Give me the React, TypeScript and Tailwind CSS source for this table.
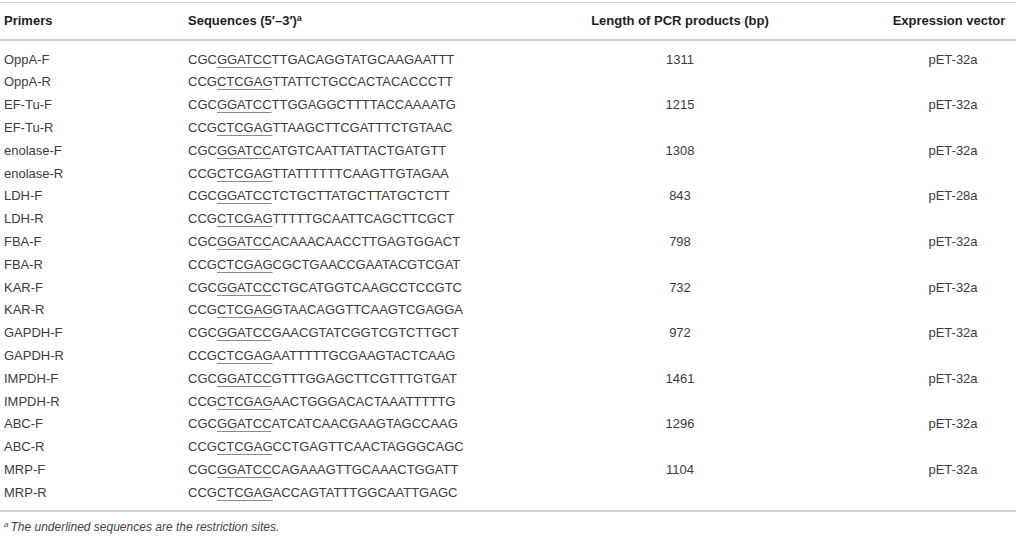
import React from 'react';

type Row = {
  name: string;
  pre: string;
  site: string;
  rest: string;
  length?: string;
  vector?: string;
};

const rows: Row[] = [
  { name: 'OppA-F', pre: 'CGC', site: 'GGATCC', rest: 'TTGACAGGTATGCAAGAATTT', length: '1311', vector: 'pET-32a' },
  { name: 'OppA-R', pre: 'CCG', site: 'CTCGAG', rest: 'TTATTCTGCCACTACACCCTT' },
  { name: 'EF-Tu-F', pre: 'CGC', site: 'GGATCC', rest: 'TTGGAGGCTTTTACCAAAATG', length: '1215', vector: 'pET-32a' },
  { name: 'EF-Tu-R', pre: 'CCG', site: 'CTCGAG', rest: 'TTAAGCTTCGATTTCTGTAAC' },
  { name: 'enolase-F', pre: 'CGC', site: 'GGATCC', rest: 'ATGTCAATTATTACTGATGTT', length: '1308', vector: 'pET-32a' },
  { name: 'enolase-R', pre: 'CCG', site: 'CTCGAG', rest: 'TTATTTTTTCAAGTTGTAGAA' },
  { name: 'LDH-F', pre: 'CGC', site: 'GGATCC', rest: 'TCTGCTTATGCTTATGCTCTT', length: '843', vector: 'pET-28a' },
  { name: 'LDH-R', pre: 'CCG', site: 'CTCGAG', rest: 'TTTTTGCAATTCAGCTTCGCT' },
  { name: 'FBA-F', pre: 'CGC', site: 'GGATCC', rest: 'ACAAACAACCTTGAGTGGACT', length: '798', vector: 'pET-32a' },
  { name: 'FBA-R', pre: 'CCG', site: 'CTCGAG', rest: 'CGCTGAACCGAATACGTCGAT' },
  { name: 'KAR-F', pre: 'CGC', site: 'GGATCC', rest: 'CTGCATGGTCAAGCCTCCGTC', length: '732', vector: 'pET-32a' },
  { name: 'KAR-R', pre: 'CCG', site: 'CTCGAG', rest: 'GTAACAGGTTCAAGTCGAGGA' },
  { name: 'GAPDH-F', pre: 'CGC', site: 'GGATCC', rest: 'GAACGTATCGGTCGTCTTGCT', length: '972', vector: 'pET-32a' },
  { name: 'GAPDH-R', pre: 'CCG', site: 'CTCGAG', rest: 'AATTTTTGCGAAGTACTCAAG' },
  { name: 'IMPDH-F', pre: 'CGC', site: 'GGATCC', rest: 'GTTTGGAGCTTCGTTTGTGAT', length: '1461', vector: 'pET-32a' },
  { name: 'IMPDH-R', pre: 'CCG', site: 'CTCGAG', rest: 'AACTGGGACACTAAATTTTTG' },
  { name: 'ABC-F', pre: 'CGC', site: 'GGATCC', rest: 'ATCATCAACGAAGTAGCCAAG', length: '1296', vector: 'pET-32a' },
  { name: 'ABC-R', pre: 'CCG', site: 'CTCGAG', rest: 'CCTGAGTTCAACTAGGGCAGC' },
  { name: 'MRP-F', pre: 'CGC', site: 'GGATCC', rest: 'CAGAAAGTTGCAAACTGGATT', length: '1104', vector: 'pET-32a' },
  { name: 'MRP-R', pre: 'CCG', site: 'CTCGAG', rest: 'ACCAGTATTTGGCAATTGAGC' },
];

const grid = 'grid grid-cols-[188px_372px_240px_216px]';

const App: React.FC = () => {
  return (
    <div className="w-[1016px] h-[548px] bg-white pt-[2px] font-['Liberation_Sans',Arial,sans-serif] text-[13px] text-[#3c3c3c] overflow-hidden">
      {/* Header */}
      <div className={`${grid} h-[39px] items-center border-t border-b-2 border-[#d0d0d0] font-bold text-[#1e1e1e]`}>
        <div className="pl-[4px]">Primers</div>
        <div>
          Sequences (5′–3′)<sup className="text-[9px] font-bold">a</sup>
        </div>
        <div className="text-center">Length of PCR products (bp)</div>
        <div className="pl-[88px] pr-[6px] text-center">Expression vector</div>
      </div>

      {/* Body */}
      <div className="pt-[7px] pb-[6px] border-b-2 border-[#d0d0d0]">
        {rows.map((row) => (
          <div key={row.name} className={`${grid} h-[22.8px] items-center`}>
            <div className="pl-[4px]">{row.name}</div>
            <div>
              {row.pre}
              <span className="underline decoration-[#8a8a8a] underline-offset-[3px]">{row.site}</span>
              {row.rest}
            </div>
            <div className="text-center">{row.length}</div>
            <div className="pl-[96px] pr-[6px] text-center">{row.vector}</div>
          </div>
        ))}
      </div>

      {/* Footnote */}
      <div className="pt-[6px] pl-[4px] italic text-[12px] text-[#444]">
        <sup className="text-[8px] mr-[2px]">a</sup>The underlined sequences are the restriction sites.
      </div>
    </div>
  );
};

export default App;
